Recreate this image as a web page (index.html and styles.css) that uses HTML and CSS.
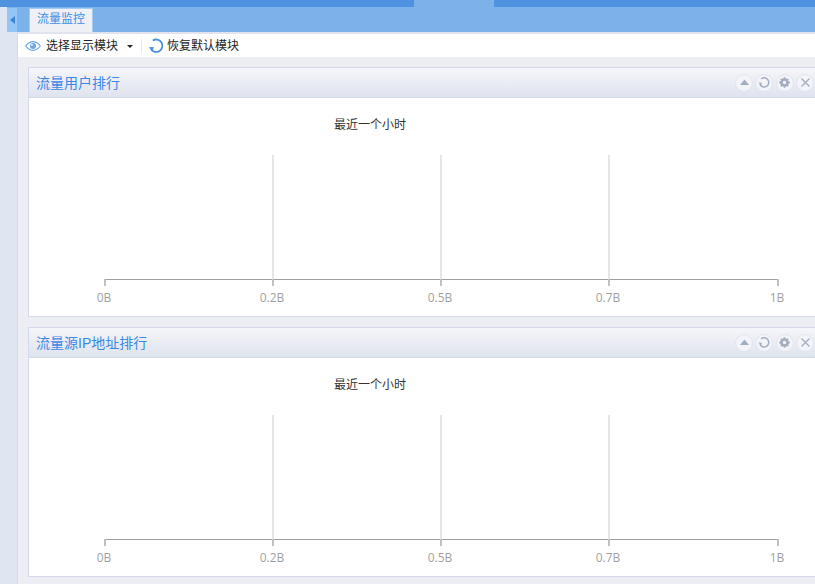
FILE: index.html
```html
<!DOCTYPE html>
<html lang="zh-CN">
<head>
<meta charset="utf-8">
<title>流量监控</title>
<link rel="stylesheet" href="styles.css">
</head>
<body>
<div class="topbar">
  <div class="topbar-seg"></div>
  <div class="topbar-gap"></div>
  <div class="topbar-seg topbar-seg-fill"></div>
</div>
<div class="layout">
  <aside class="rail"></aside>
  <main class="main">
    <div class="tabbar">
      <button class="collapse" aria-label="收起"><span class="collapse-arrow"></span></button>
      <div class="tab">流量监控</div>
    </div>
    <div class="toolbar">
      <svg class="ico-eye" width="16" height="10" viewBox="0 0 16 10"><path d="M.7 5C3 2 5.300 .7 8 .7S13 2 15.300 5C13 8 10.700 9.300 8 9.300S3 8 .7 5z" fill="none" stroke="#6ba6e2" stroke-width="1.200"/><circle cx="8" cy="5" r="3" fill="#6ba6e2"/><circle cx="7" cy="4" r=".9" fill="#fff"/></svg>
      <span class="tool-label">选择显示模块</span>
      <span class="caret"></span>
      <span class="tool-sep"></span>
      <svg class="ico-reset" width="17" height="16" viewBox="0 0 17 16"><path d="M4.800 2.500A6.200 6.200 0 1 1 3 11.200" fill="none" stroke="#4a90e2" stroke-width="1.800"/><path d="M.8 9.300l5-.3-1.300 4.800z" fill="#4a90e2"/></svg>
      <span class="tool-label">恢复默认模块</span>
    </div>
    <div class="content">
      <section class="panel">
        <header class="panel-head">
          <h2 class="panel-title">流量用户排行</h2>
          <div class="panel-tools">
            <span class="round"><svg width="11" height="11" viewBox="0 0 11 11"><path d="M5.500 2.500L10 8H1z" fill="#a3adc0"/></svg></span>
            <span class="round"><svg width="13" height="13" viewBox="0 0 13 13"><path d="M3.200 2.800A4.600 4.600 0 1 1 2 8.400" fill="none" stroke="#a3adc0" stroke-width="1.500"/><path d="M.5 6.500l3.400.2-1 3.200z" fill="#a3adc0"/></svg></span>
            <span class="round"><svg width="13" height="13" viewBox="0 0 13 13"><circle cx="6.500" cy="6.500" r="3" fill="none" stroke="#a3adc0" stroke-width="2.600"/><path d="M6.500 1.200v2M6.500 9.800v2M1.200 6.500h2M9.800 6.500h2M2.800 2.800l1.400 1.400M8.800 8.800l1.400 1.400M2.800 10.200l1.400-1.400M8.800 4.200l1.400-1.400" stroke="#a3adc0" stroke-width="1.800"/></svg></span>
            <span class="round"><svg width="11" height="11" viewBox="0 0 11 11"><path d="M1.500 1.500l8 8M9.500 1.500l-8 8" stroke="#a3adc0" stroke-width="1.300"/></svg></span>
          </div>
        </header>
        <div class="panel-body">
          <svg class="chart" width="786" height="218" viewBox="0 0 786 218">
            <text class="chart-title" x="341" y="31">最近一个小时</text>
            <path class="grid" d="M244 57V181M412 57V181M580 57V181"/>
            <path class="axis" d="M76 181.500H750"/>
            <path class="tick" d="M76 181V188M244 181V188M412 181V188M580 181V188M749 181V188"/>
            <text class="tick-label" x="75" y="204">0B</text>
            <text class="tick-label" x="243" y="204">0.2B</text>
            <text class="tick-label" x="411" y="204">0.5B</text>
            <text class="tick-label" x="579" y="204">0.7B</text>
            <text class="tick-label" x="748" y="204">1B</text>
          </svg>
        </div>
      </section>
      <section class="panel">
        <header class="panel-head">
          <h2 class="panel-title">流量源IP地址排行</h2>
          <div class="panel-tools">
            <span class="round"><svg width="11" height="11" viewBox="0 0 11 11"><path d="M5.500 2.500L10 8H1z" fill="#a3adc0"/></svg></span>
            <span class="round"><svg width="13" height="13" viewBox="0 0 13 13"><path d="M3.200 2.800A4.600 4.600 0 1 1 2 8.400" fill="none" stroke="#a3adc0" stroke-width="1.500"/><path d="M.5 6.500l3.400.2-1 3.200z" fill="#a3adc0"/></svg></span>
            <span class="round"><svg width="13" height="13" viewBox="0 0 13 13"><circle cx="6.500" cy="6.500" r="3" fill="none" stroke="#a3adc0" stroke-width="2.600"/><path d="M6.500 1.200v2M6.500 9.800v2M1.200 6.500h2M9.800 6.500h2M2.800 2.800l1.400 1.400M8.800 8.800l1.400 1.400M2.800 10.200l1.400-1.400M8.800 4.200l1.400-1.400" stroke="#a3adc0" stroke-width="1.800"/></svg></span>
            <span class="round"><svg width="11" height="11" viewBox="0 0 11 11"><path d="M1.500 1.500l8 8M9.500 1.500l-8 8" stroke="#a3adc0" stroke-width="1.300"/></svg></span>
          </div>
        </header>
        <div class="panel-body">
          <svg class="chart" width="786" height="218" viewBox="0 0 786 218">
            <text class="chart-title" x="341" y="31">最近一个小时</text>
            <path class="grid" d="M244 57V181M412 57V181M580 57V181"/>
            <path class="axis" d="M76 181.500H750"/>
            <path class="tick" d="M76 181V188M244 181V188M412 181V188M580 181V188M749 181V188"/>
            <text class="tick-label" x="75" y="204">0B</text>
            <text class="tick-label" x="243" y="204">0.2B</text>
            <text class="tick-label" x="411" y="204">0.5B</text>
            <text class="tick-label" x="579" y="204">0.7B</text>
            <text class="tick-label" x="748" y="204">1B</text>
          </svg>
        </div>
      </section>
    </div>
  </main>
</div>
</body>
</html>
```
FILE: styles.css
```css
* { box-sizing: border-box; }
html, body { margin: 0; height: 100%; overflow: hidden; }
body {
  width: 815px;
  height: 584px;
  display: flex;
  flex-direction: column;
  font-family: "Liberation Sans", "Noto Sans CJK SC", sans-serif;
  font-size: 12px;
  background: #eceef4;
  color: #222;
}
.topbar { display: flex; height: 7px; flex: none; background: #7bb2ea; }
.topbar-seg { width: 414px; background: #4f92e0; }
.topbar-gap { width: 80px; }
.topbar-seg-fill { flex: 1; width: auto; }
.layout { flex: 1; display: flex; min-height: 0; }
.rail { width: 18px; flex: none; background: #dfe5f1; border-right: 1px solid #d3daea; }
.main { flex: 1; min-width: 0; display: flex; flex-direction: column; }
.tabbar {
  height: 25px;
  flex: none;
  margin-left: -18px;
  padding-left: 7px;
  display: flex;
  align-items: flex-end;
  background: linear-gradient(to right, #dfe5f1 7px, #7bb2ea 7px);
}
.collapse {
  width: 10px;
  height: 24px;
  padding: 0;
  border: 0;
  background: #93c6f6;
  display: flex;
  align-items: center;
  justify-content: center;
}
.collapse-arrow {
  width: 0;
  height: 0;
  border-style: solid;
  border-width: 4px 5px 4px 0;
  border-color: transparent #3b84d8 transparent transparent;
}
.tab {
  width: 64px;
  height: 24px;
  margin-left: 12px;
  border: 1px solid #a3cbf3;
  border-bottom: 0;
  background: #eef0f6;
  color: #3f8ee6;
  text-align: center;
  line-height: 21px;
  font-size: 12px;
}
.toolbar {
  height: 25px;
  flex: none;
  border-top: 2px solid #e1e3ef;
  background: #fff;
  display: flex;
  align-items: center;
  padding-left: 7px;
  color: #222;
}
.ico-eye { margin-right: 5px; }
.tool-label { line-height: 16px; font-size: 12px; }
.caret {
  width: 0;
  height: 0;
  margin: 1px 0 0 9px;
  border-style: solid;
  border-width: 3px 3px 0;
  border-color: #222 transparent transparent;
}
.tool-sep { width: 1px; height: 14px; margin: 0 6px 0 8px; background: #e4e6ec; }
.ico-reset { margin-right: 2px; }
.content { flex: 1; min-height: 0; padding: 10px 0 0 10px; display: flex; flex-direction: column; gap: 10px; }
.panel { height: 250px; flex: none; border: 1px solid #d3d8ea; border-right: 0; background: #fff; display: flex; flex-direction: column; }
.panel-head {
  height: 30px;
  flex: none;
  border-bottom: 1px solid #d3d8ea;
  background: linear-gradient(#f5f6fa, #dfe3ee);
  display: flex;
  align-items: center;
  justify-content: space-between;
  padding: 0 1px 0 7px;
}
.panel-title { margin: -2px 0 0 0; font-size: 14px; font-weight: normal; color: #3a88e4; }
.panel-tools { display: flex; gap: 2.340px; }
.round {
  width: 18px;
  height: 18px;
  border-radius: 50%;
  background: #f2f4f9;
  border: 1px solid #e2e5ef;
  display: flex;
  align-items: center;
  justify-content: center;
}
.panel-body { flex: 1; min-height: 0; }
.chart { display: block; }
.chart-title { font-size: 12px; fill: #333; text-anchor: middle; font-family: "Liberation Sans", "Noto Sans CJK SC", sans-serif; }
.grid { stroke: #e6e6e6; stroke-width: 2; fill: none; }
.axis { stroke: #a0a0a0; stroke-width: 1; fill: none; }
.tick { stroke: #c0c0c0; stroke-width: 2; fill: none; }
.tick-label { font-size: 12px; fill: #a09fa0; text-anchor: middle; font-family: "Open Sans", "Liberation Sans", sans-serif; }
```
